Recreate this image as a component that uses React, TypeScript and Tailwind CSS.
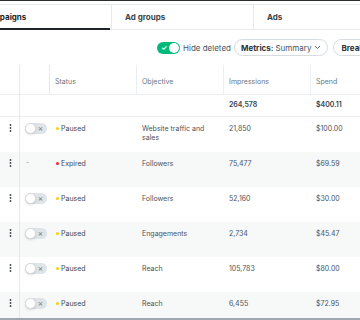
import React from 'react';

type Row = {
    toggle: boolean;
    status: 'Paused' | 'Expired';
    objective: string;
    impressions: string;
    spend: string;
};

const rows: Row[] = [
    { toggle: true, status: 'Paused', objective: 'Website traffic and sales', impressions: '21,850', spend: '$100.00' },
    { toggle: false, status: 'Expired', objective: 'Followers', impressions: '75,477', spend: '$69.59' },
    { toggle: true, status: 'Paused', objective: 'Followers', impressions: '52,160', spend: '$30.00' },
    { toggle: true, status: 'Paused', objective: 'Engagements', impressions: '2,734', spend: '$45.47' },
    { toggle: true, status: 'Paused', objective: 'Reach', impressions: '105,783', spend: '$80.00' },
    { toggle: true, status: 'Paused', objective: 'Reach', impressions: '6,455', spend: '$72.95' },
];

const cols = 'grid grid-cols-[20px_30px_87px_87px_87px_87px]';

const Kebab: React.FC = () => (
    <svg width="3" height="8" viewBox="0 0 3 8" className="fill-[#3b444b]">
        <circle cx="1.5" cy="1" r="0.9" />
        <circle cx="1.5" cy="4" r="0.9" />
        <circle cx="1.5" cy="7" r="0.9" />
    </svg>
);

const OffToggle: React.FC = () => (
    <div className="relative w-[22px] h-[11px] rounded-full bg-[#dfe4e8]">
        <div className="absolute left-0 top-0 w-[11px] h-[11px] rounded-full bg-white border border-[#d4dadf] shadow-sm" />
        <span className="absolute right-[4px] top-[-1px] text-[8px] leading-[12px] text-[#6e7880]">×</span>
    </div>
);

const App: React.FC = () => {
    return (
        <div className="w-[360px] h-[320px] overflow-hidden bg-white border-t border-[#2b2f33] font-['Inter',sans-serif] text-[#4a545c]">
            <div className="pt-[3px]">
                {/* tabs */}
                <div className="flex ml-[-31px] h-[26px] border-t border-b border-[#e6eaed]">
                    <div className="relative shrink-0 w-[142px] pl-[13px] flex items-center text-[8px] font-bold text-[#1a1f24]">
                        Campaigns
                        <div className="absolute left-0 right-[1px] bottom-[-1px] h-[2px] bg-[#1f2429]" />
                    </div>
                    <div className="shrink-0 w-[142px] pl-[13px] flex items-center border-l border-[#e6eaed] text-[8px] font-bold text-[#3b444b]">
                        Ad groups
                    </div>
                    <div className="shrink-0 w-[142px] pl-[13px] flex items-center border-l border-[#e6eaed] text-[8px] font-bold text-[#3b444b]">
                        Ads
                    </div>
                </div>

                {/* toolbar */}
                <div className="flex items-center h-[35px] pl-[157px] gap-[3px] whitespace-nowrap">
                    <div className="relative w-[23px] h-[12px] rounded-full bg-[#00ba7c] shrink-0">
                        <span className="absolute left-[4px] top-0 text-[7px] leading-[12px] text-white font-bold">✓</span>
                        <div className="absolute right-[1px] top-[1px] w-[10px] h-[10px] rounded-full bg-white" />
                    </div>
                    <span className="text-[8px] text-[#4a545c]">Hide deleted</span>
                    <div className="h-[17px] px-[6px] flex items-center rounded-full border border-[#d6dce0] text-[8px] text-[#4a545c] shrink-0">
                        <span className="font-bold text-[#2a3035]">Metrics:</span>
                        <span className="ml-[2px]">Summary</span>
                        <svg width="7" height="5" viewBox="0 0 7 5" className="ml-[3px] stroke-[#4a545c]" fill="none">
                            <path d="M1 1l2.5 2.5L6 1" strokeWidth="0.9" />
                        </svg>
                    </div>
                    <div className="ml-[2px] h-[17px] px-[7px] flex items-center rounded-full border border-[#d6dce0] text-[8px] font-bold text-[#2a3035] shrink-0">
                        Breakdown
                    </div>
                </div>

                {/* table */}
                <div className="h-[253px] overflow-hidden">
                    <div className={`${cols} h-[30px] border-b border-[#eceff1] text-[7px] text-[#6b7680]`}>
                        <div className="border-r border-[#e3e8ec]" />
                        <div className="border-r border-[#e3e8ec]" />
                        <div className="border-r border-[#eceff1] flex items-end pb-[7px] pl-[5px]">Status</div>
                        <div className="border-r border-[#eceff1] flex items-end pb-[7px] pl-[5px]">Objective</div>
                        <div className="border-r border-[#eceff1] flex items-end pb-[7px] pl-[5px]">Impressions</div>
                        <div className="flex items-end pb-[7px] pl-[5px]">Spend</div>
                    </div>
                    <div className={`${cols} h-[22px] border-b border-[#eceff1] text-[7px] font-semibold text-[#3a4147]`}>
                        <div className="border-r border-[#e3e8ec]" />
                        <div />
                        <div />
                        <div />
                        <div className="flex items-center pl-[5px]">264,578</div>
                        <div className="flex items-center pl-[5px]">$400.11</div>
                    </div>
                    {rows.map((r, i) => (
                        <div
                            key={i}
                            className={`${cols} h-[35px] text-[7px] leading-[9px] ${i % 2 === 1 ? 'bg-[#f7f8f8]' : 'bg-white'}`}
                        >
                            <div className="border-r border-[#e3e8ec] flex justify-center pt-[7px] pl-[2px]">
                                <Kebab />
                            </div>
                            <div className="pt-[6px] pl-[5px]">
                                {r.toggle ? <OffToggle /> : <span className="text-[#8a949b] pl-[1px]">-</span>}
                            </div>
                            <div className="pt-[7px] pl-[6px] flex items-start gap-[2px] text-[#3e474e]">
                                <span
                                    className={`mt-[3px] w-[3px] h-[3px] rounded-full ${r.status === 'Paused' ? 'bg-[#ffcc00]' : 'bg-[#f4212e]'}`}
                                />
                                {r.status}
                            </div>
                            <div className="pt-[7px] pl-[5px] pr-[10px]">{r.objective}</div>
                            <div className="pt-[7px] pl-[5px]">{r.impressions}</div>
                            <div className="pt-[7px] pl-[5px]">{r.spend}</div>
                        </div>
                    ))}
                </div>
                <div className="h-[2px] bg-[#9ea7ae]" />
            </div>
        </div>
    );
};

export default App;
